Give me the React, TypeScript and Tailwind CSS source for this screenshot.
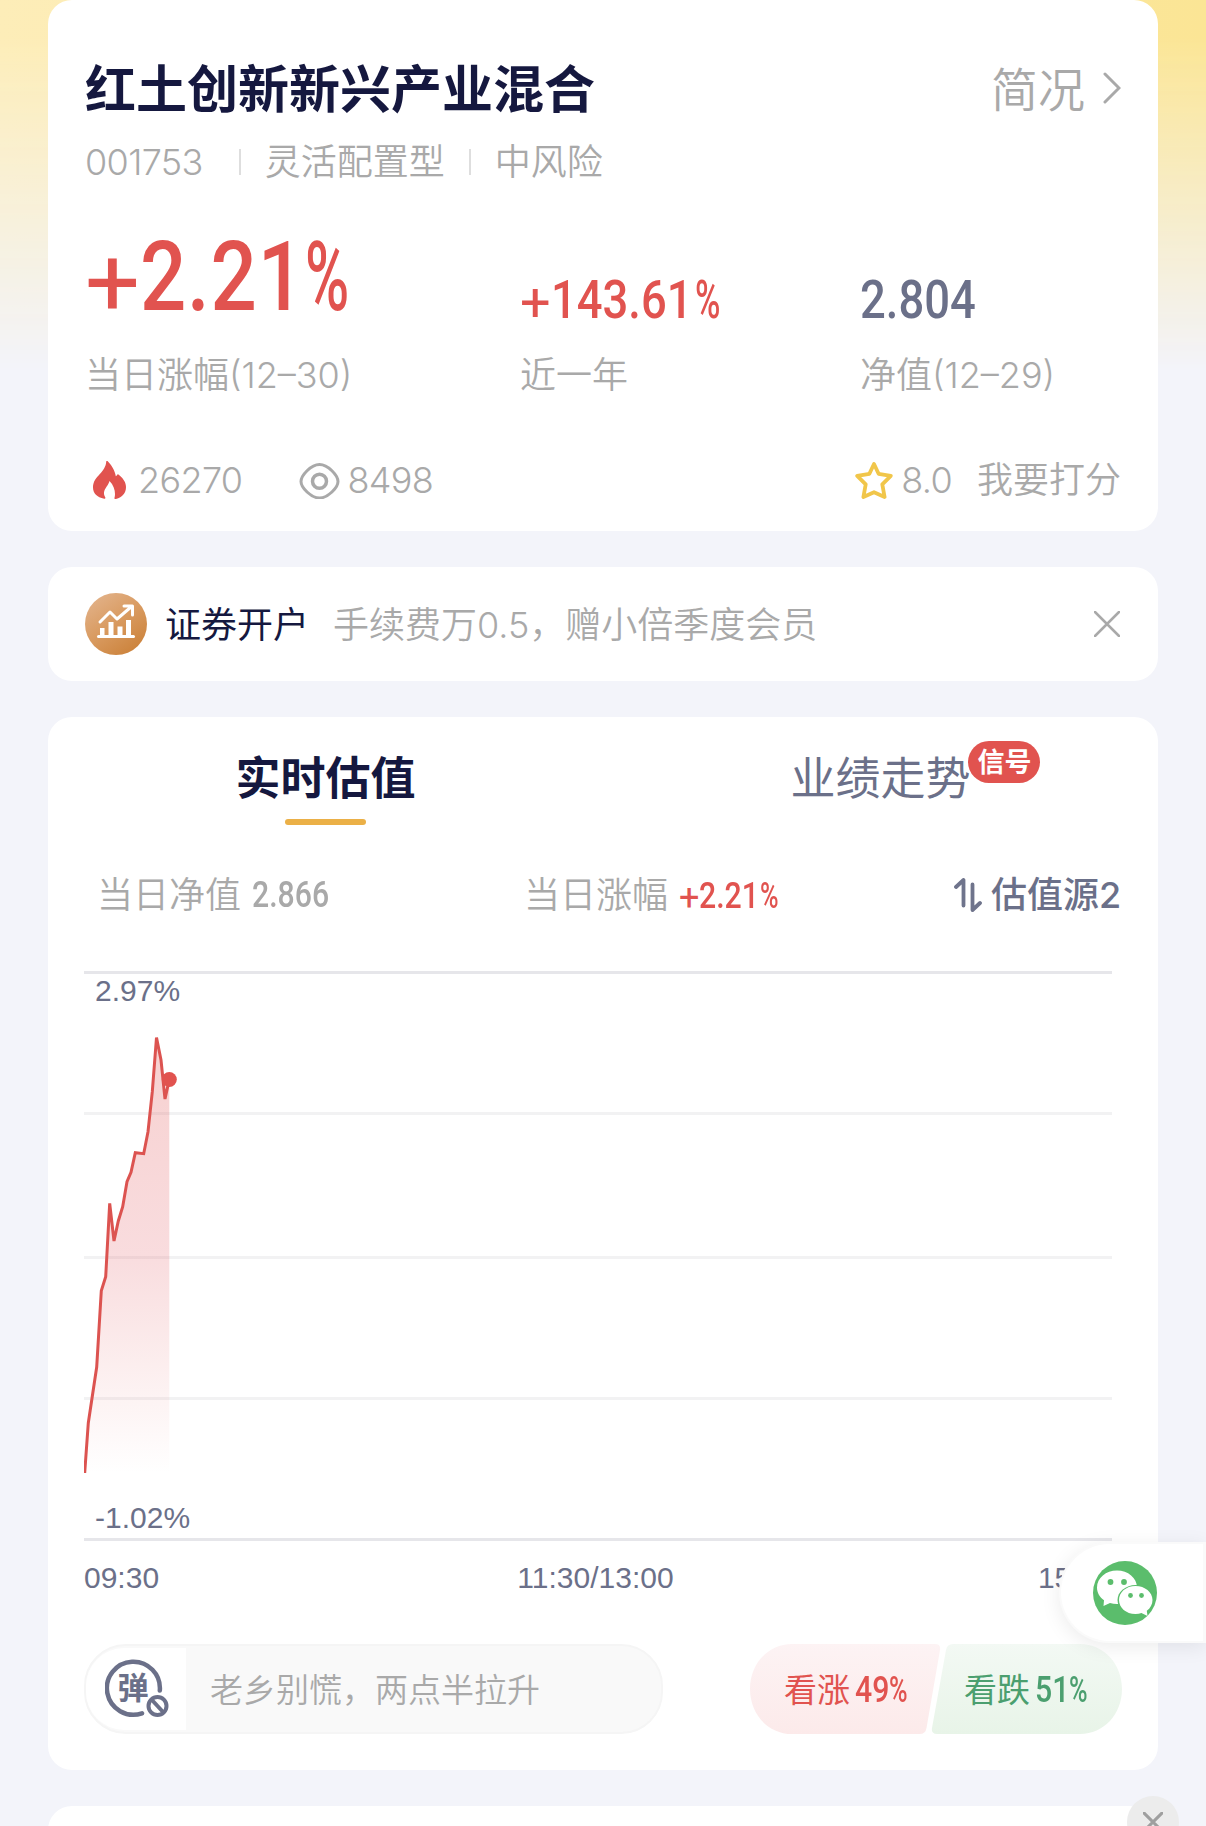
import { ReactNode } from "react";
import clsx from "clsx";

const linePoints = [
  [0.7, 502], [4.3, 452], [12.7, 396], [17.3, 319.7], [21.7, 305.7],
  [25.7, 232.3], [30, 270], [34.3, 250], [38.7, 235.7], [43, 210.7],
  [47, 201.3], [51.3, 181.7], [59.7, 182.7], [64, 160.7], [68.3, 120.7],
  [72.5, 66.5], [77, 89], [81, 128], [85.3, 108.5]
];

const Card = ({ className, children }: { className?: string; children?: ReactNode }) => (
  <section className={clsx("mx-12 rounded-3xl bg-white", className)}>{children}</section>
);

const Digits = ({ children }: { children: ReactNode }) => (
  <span className="tracking-[-0.018em]">{children}</span>
);

const sizes = {
  sm: { digits: "", percent: "scale-x-[0.7]", gap: "ml-[-0.3em]" },
  pair: { digits: "", percent: "scale-x-[0.7]", gap: "ml-[-0.19em]" },
  md: { digits: "", percent: "scale-x-[0.64]", gap: "ml-[-0.45em]" },
  lg: { digits: "tracking-[0.01em]", percent: "scale-x-[0.62]", gap: "ml-[-0.32em]" }
};

// condensed figure: sign, digits and percent are squeezed separately
const Figure = ({ value, size = "sm" }: { value: string; size?: keyof typeof sizes }) => (
  <span className="inline-flex whitespace-nowrap font-[Roboto,sans-serif] font-medium leading-none">
    {value.startsWith("+") && <span className="inline-block translate-y-[0.06em] font-normal">+</span>}
    <span className={clsx("inline-block origin-left scale-x-[0.84]", sizes[size].digits)}>
      {value.replace(/[+%]/g, "")}
    </span>
    {value.endsWith("%") && (
      <span className={clsx("inline-block origin-left", sizes[size].percent, sizes[size].gap)}>%</span>
    )}
  </span>
);

const FireIcon = () => (
  <svg className="h-[38px] w-[33px]" viewBox="0 0 33 38" fill="#e1534f">
    <path d="M14.500 0C18 3.500 22 9.500 22.800 15.200c1-.5 1.500-1.300 2-2.200C30 17 33 21 33 26c0 6-3.500 10.300-10 12-1 .2-2-.3-1.500-1.300 1.300-4.500.2-11.500-5-16.700-1 4.500-5.100 7.300-5.500 11.600-.2 2 .4 3.300 1.200 4.700.5.900 0 1.700-1 1.400C4 36.500 0 32 0 26.500 0 20.500 3.200 17 6.600 13.300 10 9.500 13 5.500 13.200.7c0-.7.800-1.100 1.300-.7z" />
  </svg>
);

const EyeIcon = () => (
  <svg className="h-[38px] w-[41px]" viewBox="0 0 41 38" fill="none" stroke="#a9a9a9" strokeWidth="3">
    <path d="M2 20.500C2 14.500 12 3.500 20.500 3.500S39 14.500 39 20.500 29 37 20.500 37 2 26.500 2 20.500z" />
    <circle cx="20.500" cy="20.300" r="7" strokeWidth="3.500" />
  </svg>
);

const StarIcon = () => (
  <svg className="h-[38px] w-[38px]" viewBox="0 0 38 38" fill="none" stroke="#f1c64a" strokeWidth="3.800" strokeLinejoin="round">
    <path d="M19 3l4.600 9.800 12.200 2-8.500 8.500 2.300 12.700L19 31.200 8.400 36l2.300-12.700-8.500-8.500 12.200-2z" />
  </svg>
);

const AccountIcon = () => (
  <svg className="h-[62px] w-[62px]" viewBox="0 0 62 62">
    <defs>
      <linearGradient id="copper" x1="0.1" y1="0" x2="0.8" y2="1">
        <stop offset="0" stopColor="#e3b48d" />
        <stop offset="0.5" stopColor="#d99b61" />
        <stop offset="1" stopColor="#cb8139" />
      </linearGradient>
    </defs>
    <circle cx="31" cy="31" r="31" fill="url(#copper)" />
    <g fill="#fff">
      <rect x="12" y="42" width="38" height="3" rx="1.500" />
      <rect x="15" y="35" width="4.500" height="9" />
      <rect x="23.500" y="29" width="5" height="15" />
      <rect x="32.500" y="33.500" width="5" height="10" />
      <rect x="41" y="27" width="5" height="16" />
    </g>
    <path d="M15 29l10-10 7 7 14-12M39 13h8.500v9" fill="none" stroke="#fff" strokeWidth="3" strokeLinecap="round" strokeLinejoin="round" />
  </svg>
);

const CloseIcon = ({ className }: { className: string }) => (
  <svg className={className} viewBox="0 0 26 26" fill="none" stroke="currentColor" strokeLinecap="round">
    <path d="M1 1l24 24M25 1L1 25" />
  </svg>
);

const SwitchIcon = () => (
  <svg className="h-[34px] w-[28px]" viewBox="0 0 28 34" fill="none" stroke="#6f748c" strokeWidth="3.800" strokeLinecap="round" strokeLinejoin="round">
    <path d="M2 9l7.500-7v25.500M18.500 6.500V32l7.500-7" />
  </svg>
);

const BarrageIcon = () => (
  <svg className="h-[60px] w-[66px]" viewBox="0 0 66 60" fill="none" stroke="#6b7089">
    <path d="M54.800 31.500A26.500 26.500 0 1 0 37 54.300" strokeWidth="4.500" strokeLinecap="round" />
    <text x="28" y="40" textAnchor="middle" fill="#6b7089" stroke="none" className="text-[31px] font-bold">
      弹
    </text>
    <circle cx="52.500" cy="47" r="9" strokeWidth="4" />
    <path d="M46.500 40.500l12 13" strokeWidth="4" />
  </svg>
);

const WechatIcon = () => (
  <svg className="h-16 w-16" viewBox="0 0 64 64">
    <circle cx="32" cy="32" r="32" fill="#5bbd6c" />
    <path d="M24 9.500C13 9.500 4 17 4 26.500c0 5.200 2.700 9.700 7 12.800l-.5 5.700 6.500-3c2.200.7 4.500 1 7 1 11 0 20-7 20-16.500S35 9.500 24 9.500z" fill="#fff" />
    <ellipse cx="42.500" cy="39" rx="18" ry="15" fill="#5bbd6c" />
    <path d="M42.500 25C33 25 26 31.300 26 39s7 14 16.500 14c2.200 0 4.200-.3 6-.9l6 3-.7-5.300c3.500-2.500 5.700-6.400 5.700-10.800C59.500 31.300 52 25 42.500 25z" fill="#fff" />
    <g fill="#5bbd6c">
      <circle cx="17.500" cy="21" r="2.900" />
      <circle cx="31" cy="21" r="2.900" />
      <circle cx="37.500" cy="34.500" r="2.400" />
      <circle cx="48.500" cy="34.500" r="2.400" />
    </g>
  </svg>
);

const Summary = () => (
  <Card className="h-[531px] px-[37px] pt-[53px] text-[#a9a9a9]">
    <div className="flex h-[72px] items-center justify-between">
      <h1 className="text-[51px] font-bold leading-none text-[#15183f]">红土创新新兴产业混合</h1>
      <div className="flex items-center text-[47px] font-[350] leading-none">
        简况
        <svg className="mb-0.5 ml-[18px] h-8 w-[18px]" viewBox="0 0 18 32" fill="none" stroke="#a9a9a9" strokeWidth="3" strokeLinecap="round">
          <path d="M2 2l14 14L2 30" />
        </svg>
      </div>
    </div>
    <div className="mt-3 flex h-[50px] items-center text-4xl font-[350] leading-none">
      <Digits>001753</Digits>
      <span className="ml-9 mr-6 h-[26px] w-0.5 bg-[#dedede]" />
      灵活配置型
      <span className="ml-6 mr-6 h-[26px] w-0.5 bg-[#dedede]" />
      中风险
    </div>
    <div className="mt-9 grid h-[176px] grid-cols-[435px_340px_1fr] items-end text-4xl font-[350]">
      <div>
        <div className="h-[125px] text-[97px] leading-none text-[#e1534f]">
          <Figure value="+2.21%" size="lg" />
        </div>
        <div className="h-12 leading-[48px]">当日涨幅(12–30)</div>
      </div>
      <div>
        <div className="h-[79px] text-[54px] leading-none text-[#e1534f]">
          <Figure value="+143.61%" size="md" />
        </div>
        <div className="h-12 leading-[48px]">近一年</div>
      </div>
      <div>
        <div className="h-[79px] text-[54px] leading-none text-[#6b7089]">
          <Figure value="2.804" />
        </div>
        <div className="h-12 leading-[48px]">净值(12–29)</div>
      </div>
    </div>
    <div className="mt-[57px] flex h-12 items-center pl-2 text-4xl font-[350] leading-none">
      <FireIcon />
      <span className="ml-3">
        <Digits>26270</Digits>
      </span>
      <span className="ml-[57px] mr-[7px]">
        <EyeIcon />
      </span>
      <Digits>8498</Digits>
      <span className="ml-auto mr-2">
        <StarIcon />
      </span>
      <Digits>8.0</Digits>
      <span className="ml-[25px]">我要打分</span>
    </div>
  </Card>
);

const Banner = () => (
  <Card className="mt-9 flex h-[114px] items-center pl-[37px] pr-[38px] text-4xl leading-none">
    <AccountIcon />
    <span className="ml-[18px] pt-0.5 text-[#15183f]">证券开户</span>
    <span className="ml-6 pt-0.5 font-[350] text-[#a9a9a9]">手续费万0.5，赠小倍季度会员</span>
    <CloseIcon className="ml-auto h-[26px] w-[26px] stroke-[2.5] text-[#a9a9a9]" />
  </Card>
);

const Chart = () => {
  const line = linePoints.map(([x, y]) => `${x},${y}`).join(" ");
  return (
    <div className="relative ml-9 mt-[52px] h-[570px] w-[1028px]">
      <svg className="h-[570px] w-[1028px]" viewBox="0 0 1028 570">
        <defs>
          <linearGradient id="area" gradientUnits="userSpaceOnUse" x1="0" y1="66" x2="0" y2="502">
            <stop offset="0" stopColor="#e1534f" stopOpacity="0.27" />
            <stop offset="0.5" stopColor="#e0505a" stopOpacity="0.2" />
            <stop offset="1" stopColor="#e1534f" stopOpacity="0" />
          </linearGradient>
        </defs>
        {[141, 285, 426].map(y => (
          <rect key={y} y={y} width="1028" height="3" fill="#f2f2f3" />
        ))}
        <rect width="1028" height="3" fill="#e6e6ea" />
        <rect y="567" width="1028" height="3" fill="#e6e6ea" />
        <polygon points={`${line} 85.3,502`} fill="url(#area)" />
        <polyline points={line} fill="none" stroke="#dc5350" strokeWidth="3" />
        <circle cx="85.300" cy="108.500" r="7.500" fill="#e1534f" />
      </svg>
      <span className="absolute left-[11px] top-0.5">2.97%</span>
      <span className="absolute bottom-[5px] left-[11px]">-1.02%</span>
    </div>
  );
};

const Estimate = () => (
  <Card className="mt-9 h-[1053px] pt-[26px]">
    <div className="grid h-[84px] grid-cols-2 text-[45px] leading-[72px]">
      <div className="flex flex-col items-center font-bold text-[#15183f]">
        实时估值
        <span className="mt-1 h-1.5 w-[81px] shrink-0 rounded-full bg-[#ebb047]" />
      </div>
      <div className="text-center text-[#6b7089]">
        <span className="relative">
          业绩走势
          <span className="absolute left-[178px] top-[-10px] flex h-[42px] w-[72px] items-center justify-center rounded-full bg-[#e1534f] text-[27px] font-bold leading-none text-white">
            信号
          </span>
        </span>
      </div>
    </div>
    <div className="mt-11 grid h-12 grid-cols-[427px_430px_1fr] items-center pl-[49px] text-4xl font-[350] leading-none text-[#a9a9a9]">
      <div className="flex items-center">
        <span className="mr-[11px]">当日净值</span>
        <Figure value="2.866" />
      </div>
      <div className="flex items-center">
        <span className="mr-[11px]">当日涨幅</span>
        <span className="text-[#e1534f]">
          <Figure value="+2.21%" />
        </span>
      </div>
      <div className="flex items-center font-medium text-[#6b7089]">
        <SwitchIcon />
        <span className="ml-[9px]">
          估值源<Digits>2</Digits>
        </span>
      </div>
    </div>
    <div className="font-['Liberation_Sans',sans-serif] text-[30px] leading-9 text-[#6b7089]">
      <Chart />
      <div className="ml-9 mt-[19px] flex w-[1029px] justify-between">
        <span>09:30</span>
        <span className="mr-1.5">11:30/13:00</span>
        <span>15:00</span>
      </div>
    </div>
    <div className="mx-9 mt-[48px] flex h-[90px] justify-between leading-none">
      <div className="flex w-[579px] items-center rounded-[42px] border-2 border-[#f5f5f5] bg-[#f9f9f9] text-[33px] font-[350] text-[#a9a9a9]">
        <span className="flex h-[82px] w-[100px] items-center rounded-l-[38px] bg-white pl-[19px]">
          <BarrageIcon />
        </span>
        <span className="ml-6 pt-0.5">老乡别慌，两点半拉升</span>
      </div>
      <div className="relative flex w-[372px] items-center text-[33px]">
        <svg className="absolute inset-0 h-[90px] w-[372px]" viewBox="0 0 372 90">
          <defs>
            <linearGradient id="rise" x2="0" y2="1">
              <stop stopColor="#fdf3f4" />
              <stop offset="1" stopColor="#fceaea" />
            </linearGradient>
            <linearGradient id="fall" x2="0" y2="1">
              <stop stopColor="#f3f9f4" />
              <stop offset="1" stopColor="#e8f4e8" />
            </linearGradient>
          </defs>
          <path d="M42 0H185q6 0 5 6L176.500 84q-1 6-7 6H42C18 90 0 70 0 45S18 0 42 0z" fill="url(#rise)" />
          <path d="M203 0H330c24 0 42 20 42 45s-18 45-42 45H187q-6 0-5-6L196 6q1-6 7-6z" fill="url(#fall)" />
        </svg>
        <div className="relative ml-[34px] flex w-[180px] items-center text-[#e1534f]">
          <span className="mr-[5px] pt-0.5">看涨</span>
          <span className="text-4xl leading-none">
            <Figure value="49%" size="pair" />
          </span>
        </div>
        <div className="relative flex items-center text-[#4b9f6f]">
          <span className="mr-[5px] pt-0.5">看跌</span>
          <span className="text-4xl leading-none">
            <Figure value="51%" size="pair" />
          </span>
        </div>
      </div>
    </div>
  </Card>
);

const App = () => (
  <main lang="zh-CN" className="relative h-[1826px] w-[1206px] overflow-hidden bg-[#f3f4fa] font-[Inter,'Noto_Sans_CJK_SC',sans-serif]">
    <div className="absolute inset-x-0 top-0 h-[370px] bg-linear-to-r from-[#fdedb8] to-[#fbe595] mask-b-from-10% mask-b-to-100%" />
    <div className="relative">
      <Summary />
      <Banner />
      <Estimate />
      <Card className="mt-9 h-20" />
    </div>
    <div className="absolute right-0 top-[1542px] flex h-[101px] w-[147px] items-center rounded-l-full border-2 border-r-[3px] border-[#fafafa] bg-white pl-8 shadow-[0_4px_20px_rgba(0,0,0,0.08)]">
      <WechatIcon />
    </div>
    <div className="absolute left-[1127px] top-[1796px] flex h-[52px] w-[52px] items-center justify-center rounded-full bg-[#ececec] text-[#9f9f9f]">
      <CloseIcon className="h-5 w-5 stroke-[4]" />
    </div>
  </main>
);

export default App;
